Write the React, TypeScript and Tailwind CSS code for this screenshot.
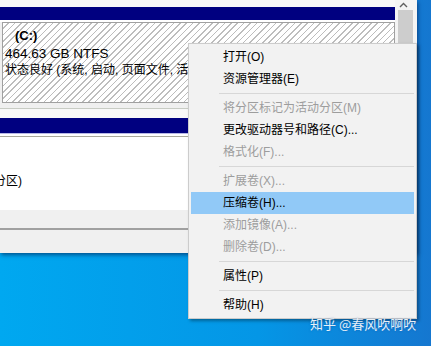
import React from 'react';

type Item = { label: string; disabled?: boolean; active?: boolean } | 'sep';

const menuItems: Item[] = [
  { label: '打开(O)' },
  { label: '资源管理器(E)' },
  'sep',
  { label: '将分区标记为活动分区(M)', disabled: true },
  { label: '更改驱动器号和路径(C)...' },
  { label: '格式化(F)...', disabled: true },
  'sep',
  { label: '扩展卷(X)...', disabled: true },
  { label: '压缩卷(H)...', active: true },
  { label: '添加镜像(A)...', disabled: true },
  { label: '删除卷(D)...', disabled: true },
  'sep',
  { label: '属性(P)' },
  'sep',
  { label: '帮助(H)' },
];

const ContextMenu: React.FC = () => (
  <div className="absolute left-[188px] top-[43px] w-[229px] border border-[#cccccc] bg-[#f2f2f2] p-[2px] shadow-[2px_2px_3px_rgba(0,0,0,0.35)]">
    {menuItems.map((item, i) =>
      item === 'sep' ? (
        <div key={i} className="flex h-[7px] items-center pl-[28px]">
          <div className="h-px w-full bg-[#d7d7d7]" />
        </div>
      ) : (
        <div
          key={i}
          className={`flex h-[22px] items-center pl-[32px] text-[12px] leading-[22px] ${
            item.active ? 'bg-[#91c9f7]' : ''
          } ${item.disabled ? 'text-[#9d9d9d]' : 'text-black'}`}
        >
          {item.label}
        </div>
      )
    )}
  </div>
);

export default function App() {
  return (
    <div className="relative h-[346px] w-[431px] overflow-hidden bg-[linear-gradient(90deg,#00a8f0_0%,#0496e6_60%,#1577d0_100%)] font-['Liberation_Sans','Noto_Sans_CJK_SC',sans-serif]">
      {/* disk management window */}
      <div className="flex h-[253px] w-[417px] bg-[#f0f0f0] shadow-[1px_2px_4px_rgba(0,30,80,0.6)]">
        <div className="flex w-[395px] flex-col">
          <div className="h-[7px] bg-[#f8f8f8]" />
          <div className="h-[13px] bg-[#000080]" />
          <div className="h-[2px] bg-white" />
          <div className="ml-[2px] h-[81px] border border-[#a0a0a0] bg-[repeating-linear-gradient(135deg,#ffffff_0px,#ffffff_3.4px,#bdbdbd_3.4px,#bdbdbd_4.5px)] pl-[2px] pt-[4px] text-[12px] leading-[17.5px] text-black">
            <div className="pl-[10px] text-[13px] font-bold">(C:)</div>
            <div className="text-[13.5px]">464.63 GB NTFS</div>
            <div className="whitespace-nowrap">状态良好 (系统, 启动, 页面文件, 活动, 故障转储, 主分区)</div>
          </div>
          <div className="h-[5px] bg-[#f0f0f0]" />
          <div className="h-px bg-[#c8ccc4]" />
          <div className="h-[9px] bg-[#f8f8f8]" />
          <div className="h-[15px] bg-[#000080]" />
          <div className="h-px bg-[#b8b8e8]" />
          <div className="h-[2px] bg-white" />
          <div className="h-px bg-[#a8a89c]" />
          <div className="flex h-[73px] items-end bg-white pb-[20px] text-[12px] leading-[17px] text-black">
            <span className="ml-[-22px] whitespace-nowrap">(主分区)</span>
          </div>
          <div className="h-[18px] bg-[#f0f0f0]" />
          <div className="h-[2px] bg-[#a0a0a0]" />
          <div className="flex-1 bg-[#f0f0f0]" />
        </div>
        {/* scrollbar */}
        <div className="flex w-[22px] flex-col bg-[#f4f4f4]">
          <div className="flex h-[10px] justify-center pr-[5px] pt-[2px]">
            <svg width="9" height="6" viewBox="0 0 9 6">
              <polyline points="1,5 4.5,1.5 8,5" fill="none" stroke="#606060" strokeWidth="1.4" />
            </svg>
          </div>
          <div className="ml-[3px] w-[15px] flex-1 bg-[#cdcdcd]" />
        </div>
      </div>

      <ContextMenu />

      <div className="absolute left-[310px] top-[316px] whitespace-nowrap font-['Noto_Sans_CJK_SC',sans-serif] text-[13px] leading-[16px] text-white/90 [text-shadow:0_0_2px_rgba(0,60,140,0.5)]">
        知乎 @春风吹啊吹
      </div>
    </div>
  );
}
